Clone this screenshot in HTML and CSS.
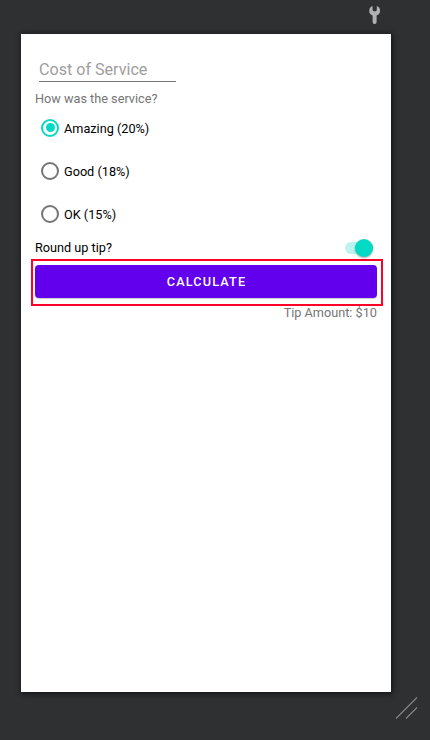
FILE: index.html
```html
<!DOCTYPE html>
<html lang="en">
<head>
<meta charset="utf-8">
<title>Tip Time</title>
<link rel="stylesheet" href="styles.css">
</head>
<body>
<header class="toolbar">
  <svg class="wrench" width="12" height="20" viewBox="0 0 12 20"><path d="M3.6 1A5.1 5.1 0 0 0 3.6 10.6V17a2 2 0 0 0 4 0V10.6A5.1 5.1 0 0 0 7.8 1V5.3L6.9 6.3H4.6L3.6 5.3Z" fill="#afb1b3"/></svg>
</header>
<main class="screen">
  <div class="field">Cost of Service</div>
  <div class="question">How was the service?</div>
  <div class="options">
    <div class="option"><span class="radio checked"></span><span class="label">Amazing (20%)</span></div>
    <div class="option"><span class="radio"></span><span class="label">Good (18%)</span></div>
    <div class="option"><span class="radio"></span><span class="label">OK (15%)</span></div>
  </div>
  <div class="round-up"><span>Round up tip?</span><span class="switch"><span class="thumb"></span></span></div>
  <div class="highlight"><div class="button">CALCULATE</div></div>
  <div class="result">Tip Amount: $10</div>
</main>
<footer class="corner">
  <svg width="24" height="24" viewBox="0 0 24 24"><path d="M2 22.5 23 1.5M12 22.5 23 11.5" stroke="#858687" stroke-width="1.1"/></svg>
</footer>
</body>
</html>
```
FILE: styles.css
```css
* { box-sizing: border-box; }
body {
  margin: 0;
  height: 740px;
  overflow: hidden;
  background: #2f3032;
  font-family: Roboto, "Liberation Sans", sans-serif;
  font-size: 12.7px;
  color: #000;
}
svg { display: block; }
.toolbar {
  height: 34px;
  padding: 5px 49px 0 0;
  display: flex;
  justify-content: flex-end;
}
.screen {
  width: 370px;
  height: 658px;
  margin-left: 21px;
  padding: 22px 14px 0;
  background: #fff;
  box-shadow: 1px 1px 5px 1px #151617;
}
.field {
  width: 137px;
  height: 26px;
  margin-left: 4px;
  border-bottom: 1px solid #757575;
  font-size: 16.1px;
  line-height: 27px;
  color: #9e9e9e;
  white-space: nowrap;
}
.question {
  margin-top: 8px;
  height: 16px;
  line-height: 18px;
  color: #757575;
}
.option {
  display: flex;
  align-items: center;
  height: 43px;
  padding-left: 6px;
  gap: 5px;
}
.label { padding-top: 2px; }
.radio {
  display: grid;
  place-items: center;
  width: 18px;
  height: 18px;
  border: 2px solid #757575;
  border-radius: 50%;
}
.checked { border-color: #03dac5; }
.checked::after {
  content: "";
  width: 9px;
  height: 9px;
  border-radius: 50%;
  background: #03dac5;
}
.round-up {
  display: flex;
  justify-content: space-between;
  align-items: center;
  height: 24px;
  padding-top: 2px;
  line-height: 22px;
}
.switch {
  display: flex;
  align-items: center;
  justify-content: flex-end;
  width: 28px;
  height: 12px;
  margin-right: 4px;
  border-radius: 6px;
  background: #b9f5ee;
}
.thumb {
  flex: none;
  width: 18px;
  height: 18px;
  border-radius: 50%;
  background: #03dac5;
  box-shadow: 0 1px 2px rgba(0, 0, 0, .35);
}
.highlight {
  width: 352px;
  height: 47px;
  margin: 0 -6px 0 -4px;
  padding: 4px 4px 0 2px;
  border: 2px solid #ff0028;
}
.button {
  height: 33px;
  border-radius: 4px;
  background: #6200ee;
  box-shadow: 0 1px 1px rgba(0, 0, 0, .2);
  color: #fff;
  font-weight: 500;
  line-height: 34px;
  letter-spacing: 1.15px;
  text-indent: 1px;
  text-align: center;
}
.result {
  line-height: 14px;
  text-align: right;
  color: #757575;
}
.corner {
  display: flex;
  justify-content: flex-end;
  padding: 4px 12px 0 0;
}
```
